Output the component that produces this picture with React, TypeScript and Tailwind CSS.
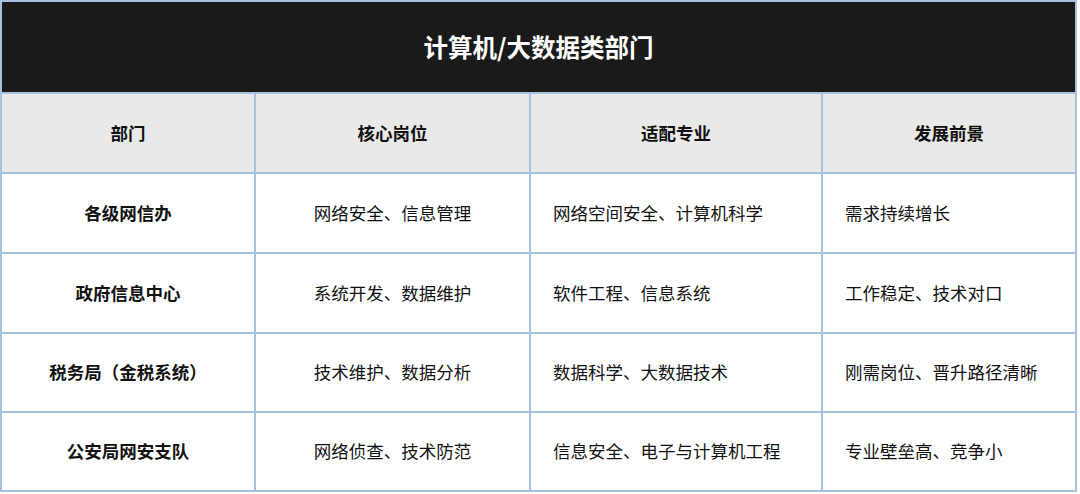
import { Fragment } from "react";

const rows = [
  ["各级网信办", "网络安全、信息管理", "网络空间安全、计算机科学", "需求持续增长"],
  ["政府信息中心", "系统开发、数据维护", "软件工程、信息系统", "工作稳定、技术对口"],
  ["税务局（金税系统）", "技术维护、数据分析", "数据科学、大数据技术", "刚需岗位、晋升路径清晰"],
  ["公安局网安支队", "网络侦查、技术防范", "信息安全、电子与计算机工程", "专业壁垒高、竞争小"],
];

const heads = ["部门", "核心岗位", "适配专业", "发展前景"];

export default function App() {
  return (
    <div className="w-[1080px] h-[494px] bg-white font-['Noto_Sans_CJK_SC',sans-serif] text-[#111]">
      <div className="w-fit bg-[#a6c2e0] p-[2px]">
        <div className="grid grid-cols-[252px_273px_290px_252px] grid-rows-[90px_78px_78px_78px_77px_77px] gap-[2px]">
          <div className="col-span-4 flex items-center justify-center bg-[#1a1a1a] text-[24.5px] font-bold text-white">
            计算机/大数据类部门
          </div>
          {heads.map((h) => (
            <div key={h} className="flex items-center justify-center bg-[#e9e9e9] text-[17.5px] font-bold">
              {h}
            </div>
          ))}
          {rows.map((r) => (
            <Fragment key={r[0]}>
              <div className="flex items-center justify-center bg-white text-[17.5px] font-bold">{r[0]}</div>
              <div className="flex items-center justify-center bg-white text-[17.5px]">{r[1]}</div>
              <div className="flex items-center bg-white pl-[22px] text-[17.5px]">{r[2]}</div>
              <div className="flex items-center bg-white pl-[22px] text-[17.5px]">{r[3]}</div>
            </Fragment>
          ))}
        </div>
      </div>
    </div>
  );
}
